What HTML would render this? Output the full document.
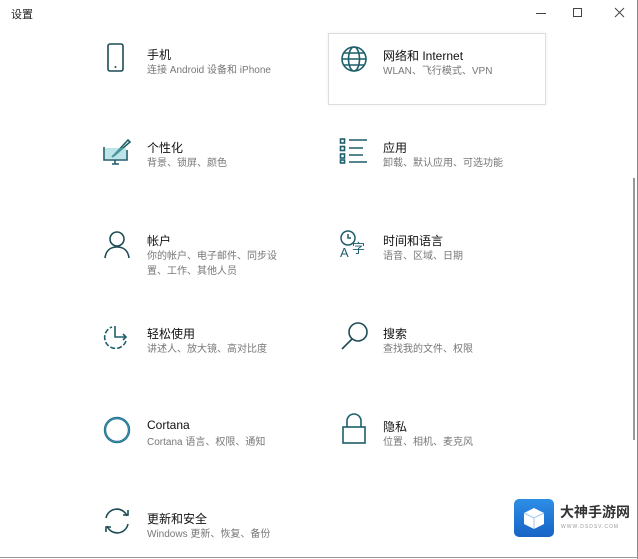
<!DOCTYPE html>
<html><head><meta charset="utf-8"><style>
*{margin:0;padding:0;box-sizing:border-box}
body{width:638px;height:559px;background:#fff;position:relative;overflow:hidden;font-family:"Liberation Sans","Noto Sans CJK SC",sans-serif}
.t{position:absolute;font-size:12px;color:#111}
.s{position:absolute;font-size:10px;color:#777;line-height:15px}
.i{position:absolute}
</style></head><body>
<div style="position:absolute;right:0;top:0;width:1px;height:559px;background:#888"></div>
<div style="position:absolute;left:0;bottom:1px;width:638px;height:1px;background:#999"></div>
<div style="position:absolute;left:633px;top:178px;width:2px;height:262px;background:#999"></div>
<div class="t" style="left:11px;top:6px;font-size:11px;color:#222">设置</div>
<div style="position:absolute;left:536px;top:13px;width:10px;height:1px;background:#444"></div>
<div style="position:absolute;left:573px;top:8px;width:9px;height:9px;border:1px solid #444"></div>
<svg class="i" style="left:614px;top:7px" width="11" height="11"><path d="M1 1L10 10M10 1L1 10" stroke="#444" stroke-width="1"/></svg>

<div style="position:absolute;left:328px;top:33px;width:218px;height:72px;border:1px solid #ddd;box-shadow:0 0 3px #eee"></div>

<!-- row1 -->
<svg class="i" style="left:106px;top:43px" width="20" height="30"><rect x="2" y="1" width="15" height="27" rx="2" fill="none" stroke="#1d4c55" stroke-width="1.6"/><circle cx="9.5" cy="24" r="1" fill="#1d4c55"/></svg>
<div class="t" style="left:147px;top:46px">手机</div>
<div class="s" style="left:147px;top:63px">连接 Android 设备和 iPhone</div>
<svg class="i" style="left:340px;top:45px" width="28" height="28"><g fill="none" stroke="#1d5f6a" stroke-width="1.6"><circle cx="14" cy="14" r="12"/><ellipse cx="14" cy="14" rx="5.5" ry="12"/><path d="M2 14H26M4 8H24M4 20H24"/></g></svg>
<div class="t" style="left:383px;top:47px">网络和 Internet</div>
<div class="s" style="left:383px;top:64px">WLAN、飞行模式、VPN</div>

<!-- row2 -->
<svg class="i" style="left:102px;top:138px" width="30" height="28"><g fill="none" stroke="#1d5f6a" stroke-width="1.6"><path d="M2 9V22H25V12"/><path d="M10 26H17M13 22V26"/><path d="M26 2L12 17L10 19L13 17L28 4Z"/></g><rect x="3" y="10" width="21" height="11" fill="#7cc9cf" opacity=".5"/></svg>
<div class="t" style="left:147px;top:139px">个性化</div>
<div class="s" style="left:147px;top:156px">背景、锁屏、颜色</div>
<svg class="i" style="left:339px;top:137px" width="30" height="28"><g fill="none" stroke="#1d5f6a" stroke-width="1.6"><rect x="1.5" y="2" width="4" height="4"/><rect x="1.5" y="9.5" width="4" height="4"/><rect x="1.5" y="17" width="4" height="4"/><rect x="1.5" y="23" width="4" height="3"/><path d="M10 3H28M10 11H24M10 18H24M10 25H28"/></g></svg>
<div class="t" style="left:383px;top:139px">应用</div>
<div class="s" style="left:383px;top:156px">卸载、默认应用、可选功能</div>

<!-- row3 -->
<svg class="i" style="left:104px;top:230px" width="26" height="30"><g fill="none" stroke="#1d4c55" stroke-width="1.6"><circle cx="13" cy="9" r="7"/><path d="M1 28C2 20 7 17 13 17C19 17 24 20 25 28"/></g></svg>
<div class="t" style="left:147px;top:232px">帐户</div>
<div class="s" style="left:147px;top:249px">你的帐户、电子邮件、同步设<br>置、工作、其他人员</div>
<svg class="i" style="left:339px;top:229px" width="30" height="30"><g fill="none" stroke="#1d5f6a" stroke-width="1.5"><circle cx="9" cy="9" r="7"/><path d="M9 5V9H12"/></g><text x="1" y="28" font-size="13" fill="#1d5f6a" font-family="Liberation Sans">A</text><text x="13" y="24" font-size="13" fill="#1d5f6a" font-family="Noto Sans CJK SC">字</text></svg>
<div class="t" style="left:383px;top:232px">时间和语言</div>
<div class="s" style="left:383px;top:249px">语音、区域、日期</div>

<!-- row4 -->
<svg class="i" style="left:102px;top:322px" width="30" height="30"><g fill="none" stroke="#1d5f6a" stroke-width="1.6"><path d="M24 19A11 11 0 1 1 10 5" stroke-dasharray="5 2"/><path d="M13 4V15H24"/><path d="M21 12L24 15L21 18"/></g></svg>
<div class="t" style="left:147px;top:325px">轻松使用</div>
<div class="s" style="left:147px;top:342px">讲述人、放大镜、高对比度</div>
<svg class="i" style="left:340px;top:321px" width="30" height="30"><g fill="none" stroke="#1d4c55" stroke-width="1.6"><circle cx="18" cy="11" r="9"/><path d="M12 18L2 28"/></g></svg>
<div class="t" style="left:383px;top:325px">搜索</div>
<div class="s" style="left:383px;top:342px">查找我的文件、权限</div>

<!-- row5 -->
<svg class="i" style="left:102px;top:415px" width="30" height="30"><circle cx="15" cy="15" r="12" fill="none" stroke="#1a6f85" stroke-width="2.4"/><circle cx="15" cy="15" r="12" fill="none" stroke="#6ad" stroke-width="1" opacity=".5"/></svg>
<div class="t" style="left:147px;top:418px">Cortana</div>
<div class="s" style="left:147px;top:435px">Cortana 语言、权限、通知</div>
<svg class="i" style="left:341px;top:413px" width="26" height="32"><g fill="none" stroke="#1d5f6a" stroke-width="1.6"><path d="M6 14V8A7 7 0 0 1 20 8V14"/><rect x="2" y="14" width="22" height="16"/></g></svg>
<div class="t" style="left:383px;top:418px">隐私</div>
<div class="s" style="left:383px;top:435px">位置、相机、麦克风</div>

<!-- row6 -->
<svg class="i" style="left:102px;top:506px" width="30" height="30"><g fill="none" stroke="#1d4c55" stroke-width="1.6"><path d="M4 12A11 11 0 0 1 25 10"/><path d="M21 9H26V4"/><path d="M26 18A11 11 0 0 1 5 20"/><path d="M9 21H4V26"/></g></svg>
<div class="t" style="left:147px;top:510px">更新和安全</div>
<div class="s" style="left:147px;top:527px">Windows 更新、恢复、备份</div>

<!-- watermark -->
<div style="position:absolute;left:514px;top:499px;width:40px;height:38px;border-radius:5px;background:linear-gradient(#2d8ee6,#1763c6)"></div>
<svg class="i" style="left:521px;top:505px" width="26" height="26"><path d="M13 3L23 8V19L13 24L3 19V8Z" fill="#fff"/><path d="M3 8L13 13L23 8M13 13V24" stroke="#9cc6f0" stroke-width="1" fill="none"/></svg>
<div style="position:absolute;left:560px;top:502px;font-size:14px;font-weight:bold;color:#333;font-family:'Noto Sans CJK SC',sans-serif">大神手游网</div>
<div style="position:absolute;left:561px;top:524px;font-size:5px;color:#999;letter-spacing:1px">WWW.DSDSV.COM</div>
</body></html>
